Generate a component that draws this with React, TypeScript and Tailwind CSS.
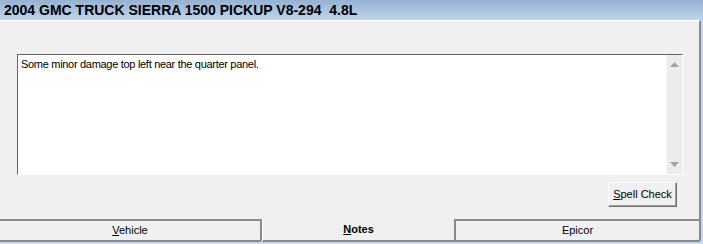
import React from 'react';

function ScrollBar() {
  return (
    <div className="w-[16px] h-full bg-[#ececec] border-l border-[#f7f7f7] flex flex-col items-center justify-between py-[7px]">
      <svg width="9" height="5" viewBox="0 0 9 5">
        <path d="M4.5 0 L9 5 L0 5 Z" fill="#a3a3a3" />
      </svg>
      <svg width="9" height="5" viewBox="0 0 9 5">
        <path d="M0 0 L9 0 L4.5 5 Z" fill="#a3a3a3" />
      </svg>
    </div>
  );
}

export default function App() {
  return (
    <div className="w-[703px] h-[244px] overflow-hidden bg-[#c4d9ef] font-['Liberation_Sans',Arial,sans-serif] text-black">
      <div className="h-[20px] bg-gradient-to-b from-[#97b1d2] to-[#c0d6ee] pl-[4px] pt-[1px] text-[14px] font-bold leading-[19px] whitespace-pre">
        2004 GMC TRUCK SIERRA 1500 PICKUP V8-294  4.8L
      </div>

      <div className="w-[701px] h-[199px] bg-[#f0f0f0] border-t border-white border-r-2 border-r-[#8a8a8a] flex flex-col">
        <div className="mt-[33px] ml-[17px] w-[666px] h-[121px] flex border-t border-l border-[#646464] border-b border-r border-b-white border-r-white bg-white">
          <div className="flex-1 pl-[3px] pt-[2px] text-[11px] leading-[14px] tracking-[-0.3px]">
            Some minor damage top left near the quarter panel.
          </div>
          <ScrollBar />
        </div>
        <div className="flex justify-end pr-[22px] mt-[7px]">
          <button className="w-[69px] h-[25px] bg-[#f0f0f0] border border-t-white border-l-white border-r-[#6e6e6e] border-b-[#6e6e6e] shadow-[inset_-1px_-1px_0_#a0a0a0] text-[11px] leading-none">
            <span className="underline">S</span>pell Check
          </button>
        </div>
      </div>

      <div className="flex h-[23px] w-[701px] text-[11px]">
        <div className="w-[262px] h-full bg-[#f0f0f0] border-t-2 border-r-2 border-b-2 border-[#8a8a8a] rounded-br-[3px] flex items-center justify-center">
          <span><span className="underline">V</span>ehicle</span>
        </div>
        <div className="w-[192px] h-full bg-[#f0f0f0] border-l border-white border-b-2 border-b-[#8a8a8a] flex items-center justify-center font-bold">
          <span><span className="underline">N</span>otes</span>
        </div>
        <div className="flex-1 h-full bg-[#f0f0f0] border-t-2 border-l-2 border-r-2 border-b-2 border-[#8a8a8a] rounded-br-[3px] flex items-center justify-center">
          Epicor
        </div>
      </div>
    </div>
  );
}
